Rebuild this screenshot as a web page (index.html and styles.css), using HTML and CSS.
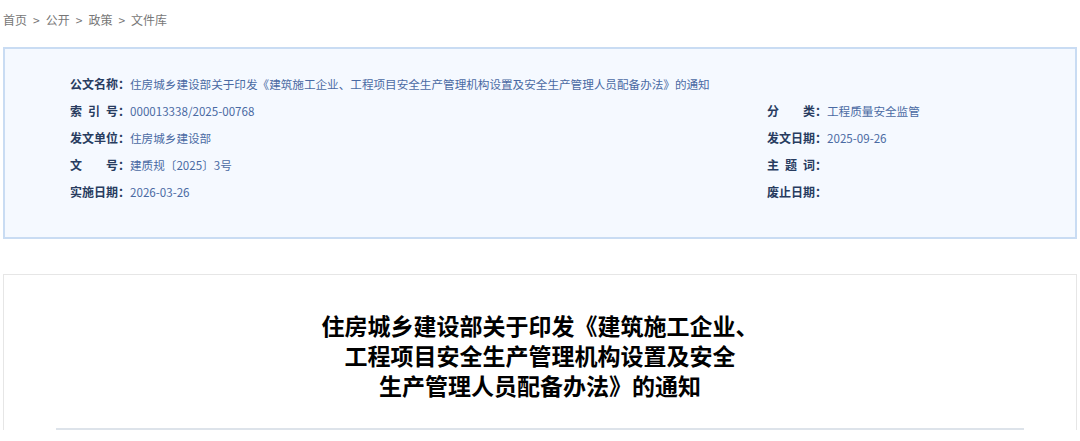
FILE: index.html
```html
<!DOCTYPE html>
<html lang="zh-CN">
<head>
    <meta charset="UTF-8">
    <meta name="viewport" content="width=device-width, initial-scale=1.0">
    <title>文件库</title>
    <link rel="stylesheet" href="styles.css">
</head>
<body>

<div class="page">
    <div class="breadcrumb">
        <a href="#">首页</a><span class="sep">&gt;</span><a href="#">公开</a><span class="sep">&gt;</span><a href="#">政策</a><span class="sep">&gt;</span><a href="#">文件库</a>
    </div>

    <!-- 文件信息 -->
    <div class="meta-box">
        <div class="meta-row full">
            <span class="label">公文名称</span><span class="colon">：</span>
            <span class="value">住房城乡建设部关于印发《建筑施工企业、工程项目安全生产管理机构设置及安全生产管理人员配备办法》的通知</span>
        </div>
        <div class="meta-row">
            <span class="label">索引号</span><span class="colon">：</span>
            <span class="value">000013338/2025-00768</span>
        </div>
        <div class="meta-row">
            <span class="label">分类</span><span class="colon">：</span>
            <span class="value">工程质量安全监管</span>
        </div>
        <div class="meta-row">
            <span class="label">发文单位</span><span class="colon">：</span>
            <span class="value">住房城乡建设部</span>
        </div>
        <div class="meta-row">
            <span class="label">发文日期</span><span class="colon">：</span>
            <span class="value">2025-09-26</span>
        </div>
        <div class="meta-row">
            <span class="label">文号</span><span class="colon">：</span>
            <span class="value">建质规〔2025〕3号</span>
        </div>
        <div class="meta-row">
            <span class="label">主题词</span><span class="colon">：</span>
            <span class="value"></span>
        </div>
        <div class="meta-row">
            <span class="label">实施日期</span><span class="colon">：</span>
            <span class="value">2026-03-26</span>
        </div>
        <div class="meta-row">
            <span class="label">废止日期</span><span class="colon">：</span>
            <span class="value"></span>
        </div>
    </div>

    <!-- 正文 -->
    <div class="article">
        <h1 class="article-title">住房城乡建设部关于印发《建筑施工企业、<br>工程项目安全生产管理机构设置及安全<br>生产管理人员配备办法》的通知</h1>
        <div class="divider"></div>
    </div>
</div>

</body>
</html>
```

FILE: styles.css
```css
body {
    font-family: "Noto Sans CJK SC", "Noto Sans", sans-serif;
    margin: 0;
    padding: 0;
    background-color: #fff;
    color: #333;
}

.page {
    margin: 0 3px;
}

.breadcrumb {
    padding: 8px 0;
    line-height: 24px;
    font-size: 12px;
    color: #777;
    margin-bottom: 7px;
}

.breadcrumb a {
    color: #777;
    text-decoration: none;
}

.breadcrumb .sep {
    margin: 0 6px;
}

/* 文件信息 */
.meta-box {
    display: grid;
    grid-template-columns: 697px 1fr;
    background-color: #f5f9ff;
    border: 2px solid #c9dcf3;
    padding: 21px 0 32px 65px;
    height: 135px;
}

.meta-row {
    display: flex;
    align-items: center;
    height: 27px;
    font-size: 11.6px;
    white-space: nowrap;
}

.meta-row.full {
    grid-column: 1 / 3;
}

.label {
    display: inline-block;
    flex-shrink: 0;
    width: 48px;
    font-size: 12px;
    text-align: justify;
    text-align-last: justify;
    font-weight: 700;
    color: #283c5f;
}

.colon {
    font-size: 12px;
    font-weight: 700;
    color: #283c5f;
}

.value {
    color: #4a6aa3;
}

/* 正文 */
.article {
    margin-top: 35px;
    border: 1px solid #e6e6e6;
    border-bottom: none;
    padding: 35px 52px 0;
}

.article-title {
    margin: 0;
    text-align: center;
    font-size: 23px;
    line-height: 30px;
    font-weight: 700;
    color: #000;
}

.divider {
    margin-top: 28px;
    height: 2px;
    background-color: #dde3ea;
}
```
